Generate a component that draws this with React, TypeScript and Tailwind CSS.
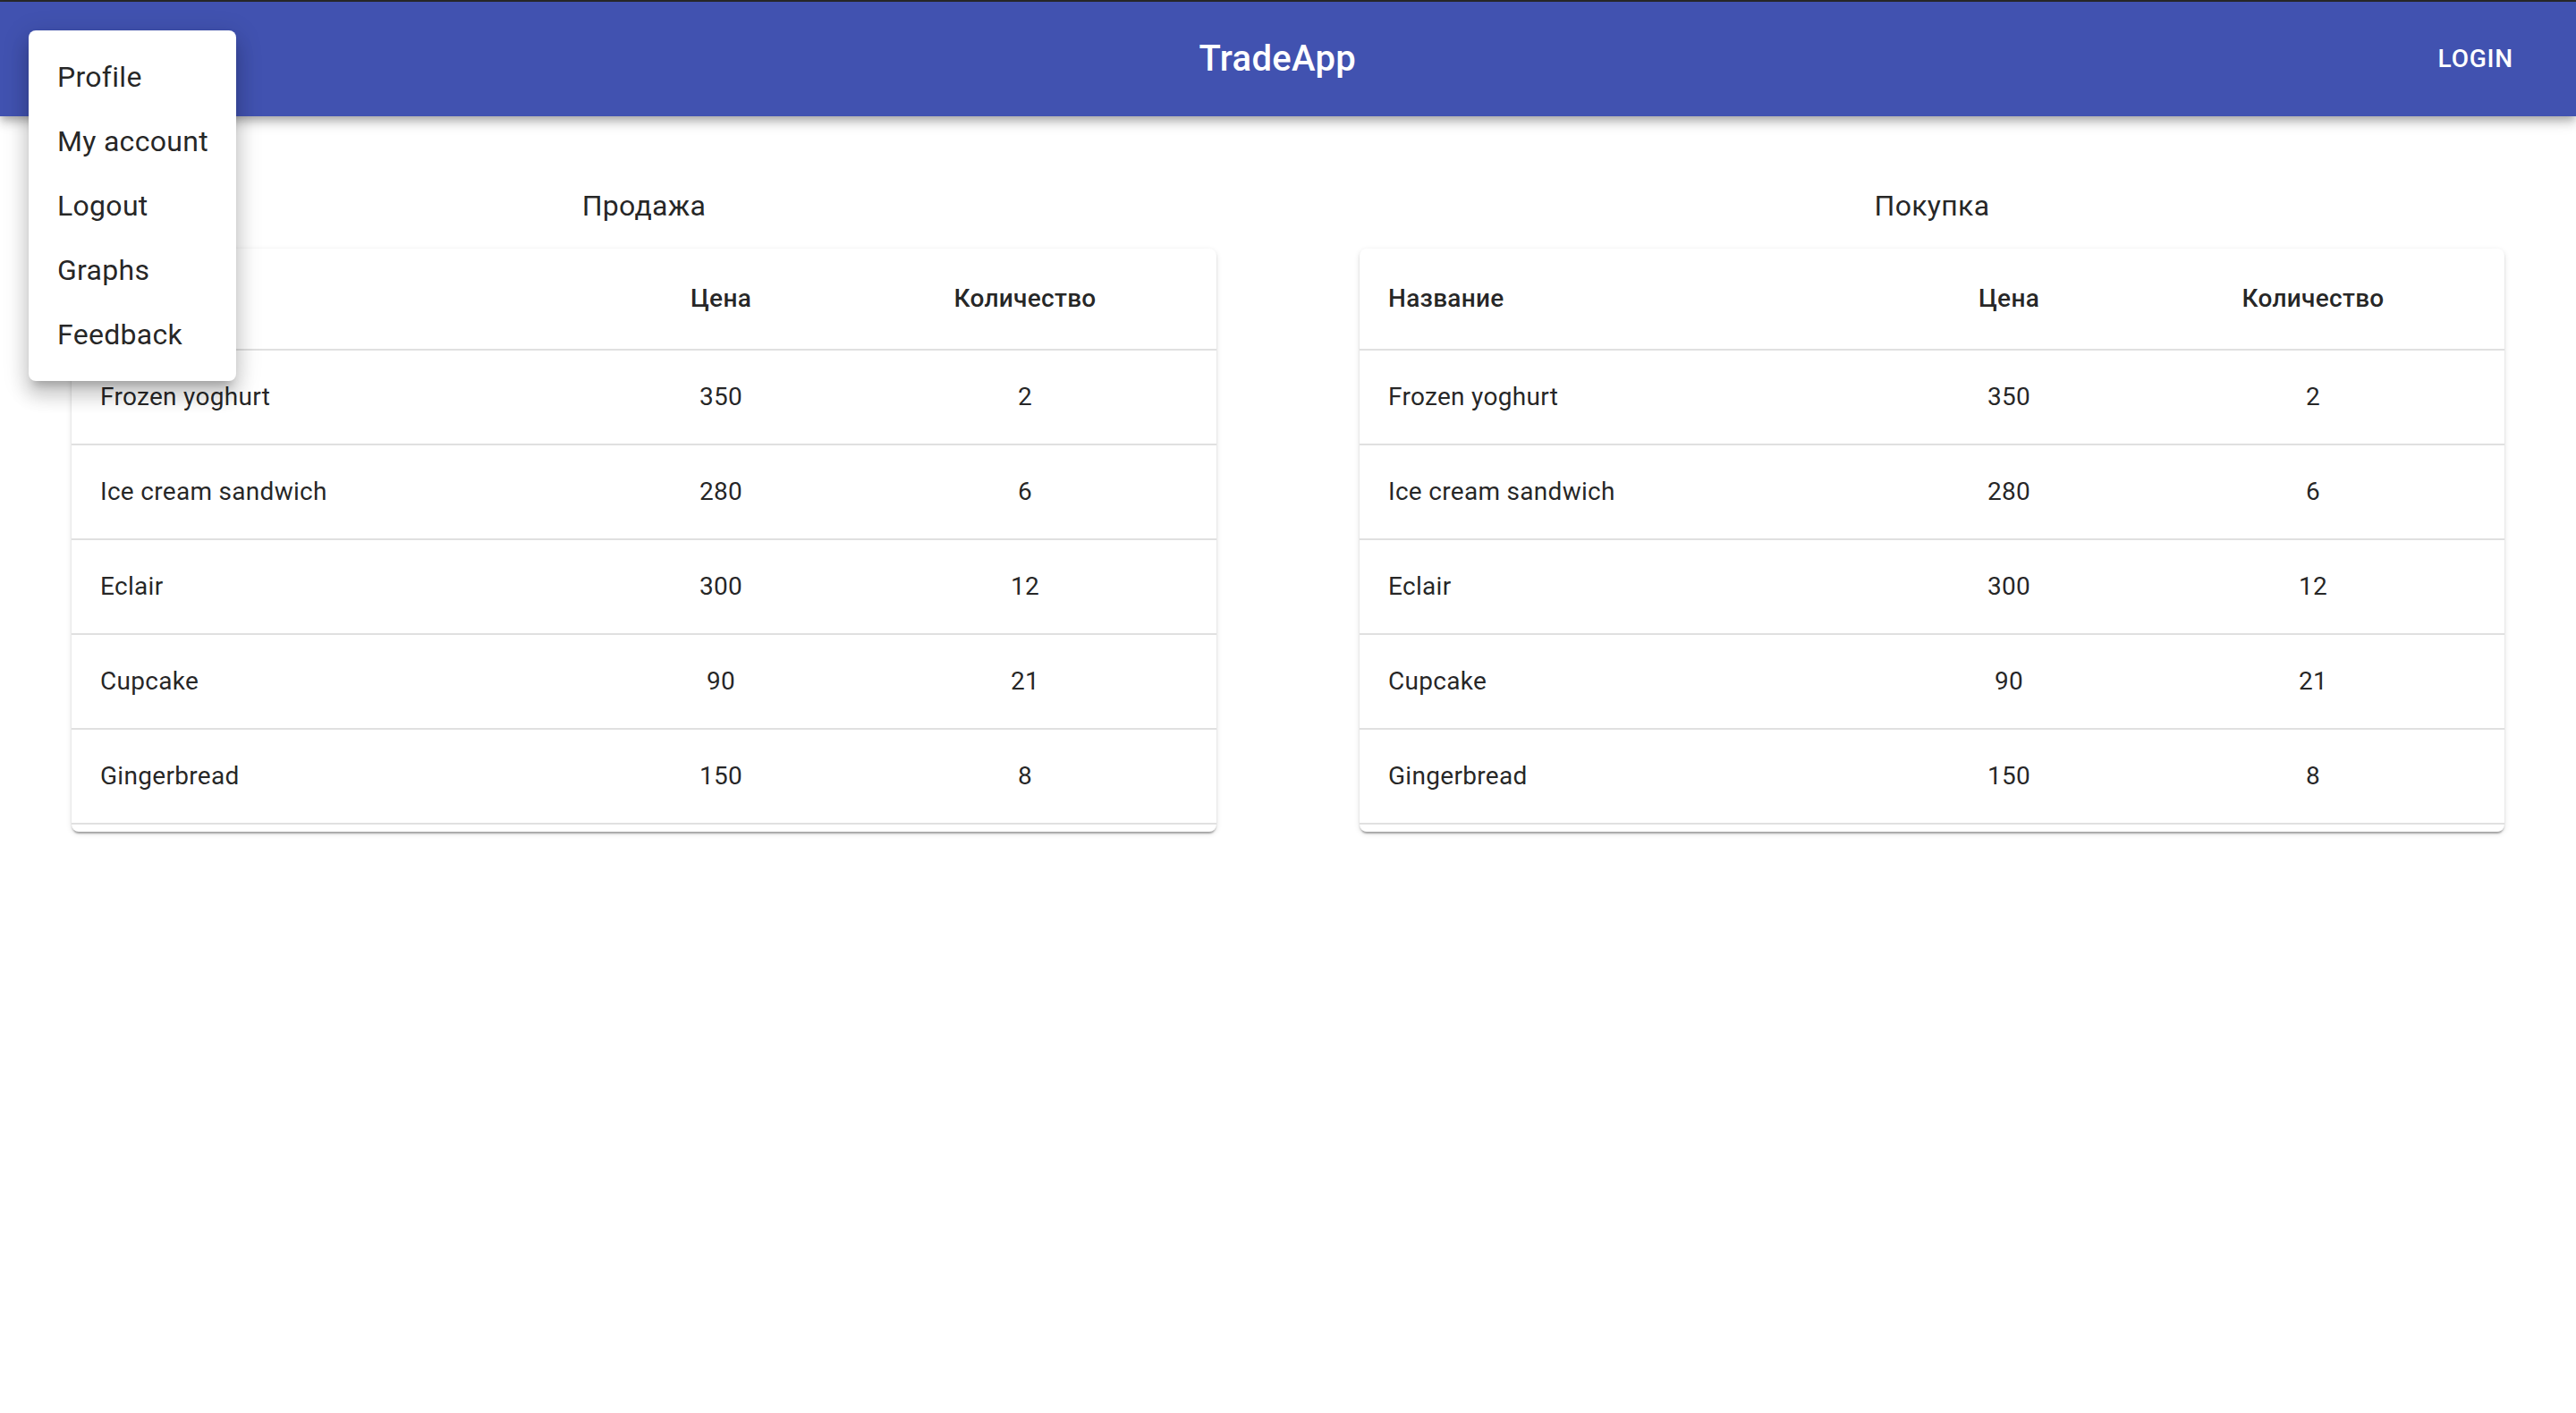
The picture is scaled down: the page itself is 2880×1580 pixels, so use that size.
import React from "react";

const rows = [
  { name: "Frozen yoghurt", price: 350, qty: 2 },
  { name: "Ice cream sandwich", price: 280, qty: 6 },
  { name: "Eclair", price: 300, qty: 12 },
  { name: "Cupcake", price: 90, qty: 21 },
  { name: "Gingerbread", price: 150, qty: 8 },
];

function DataTable() {
  return (
    <div className="rounded-[8px] bg-white pb-[8px] shadow-[0_4px_2px_-2px_rgba(0,0,0,0.2),0_2px_2px_0_rgba(0,0,0,0.14),0_2px_6px_0_rgba(0,0,0,0.12)]">
      <table className="w-full table-fixed border-collapse text-[28px] tracking-[0.3px] text-[rgba(0,0,0,0.87)]">
        <colgroup>
          <col className="w-[600px]" />
          <col className="w-[252px]" />
          <col className="w-[428px]" />
        </colgroup>
        <thead>
          <tr className="border-b-2 border-[#e0e0e0]">
            <th className="px-8 py-8 text-left font-medium leading-[48px]">Название</th>
            <th className="px-8 py-8 text-center font-medium leading-[48px]">Цена</th>
            <th className="px-8 py-8 text-center font-medium leading-[48px]">Количество</th>
          </tr>
        </thead>
        <tbody>
          {rows.map((r) => (
            <tr key={r.name} className="border-b-2 border-[#e0e0e0]">
              <td className="px-8 py-8 text-left leading-[40px]">{r.name}</td>
              <td className="px-8 py-8 text-center leading-[40px]">{r.price}</td>
              <td className="px-8 py-8 text-center leading-[40px]">{r.qty}</td>
            </tr>
          ))}
        </tbody>
      </table>
    </div>
  );
}

export default function App() {
  return (
    <div
      className="relative min-h-screen bg-white"
      style={{ fontFamily: "Roboto, 'Noto Sans', sans-serif" }}
    >
      <div className="h-[2px] bg-[#2b2b2b]" />
      <header className="relative z-10 flex h-[128px] items-center bg-[#4152b0] px-12 text-white shadow-[0_4px_8px_-2px_rgba(0,0,0,0.2),0_8px_10px_0_rgba(0,0,0,0.14),0_2px_20px_0_rgba(0,0,0,0.12)]">
        <div className="w-[99px]" />
        <h1 className="flex-1 text-center text-[40px] font-medium leading-[64px] tracking-[0.3px]">
          TradeApp
        </h1>
        <button className="mr-[6px] px-4 py-3 text-[28px] font-medium uppercase leading-[40px] tracking-[0.8px]">
          Login
        </button>
      </header>

      <main className="grid grid-cols-2 gap-[160px] px-20 pt-[76px]">
        <section>
          <h2 className="mb-6 text-center text-[32px] font-normal leading-[48px] tracking-[0.3px] text-[rgba(0,0,0,0.87)]">
            Продажа
          </h2>
          <DataTable />
        </section>
        <section>
          <h2 className="mb-6 text-center text-[32px] font-normal leading-[48px] tracking-[0.3px] text-[rgba(0,0,0,0.87)]">
            Покупка
          </h2>
          <DataTable />
        </section>
      </main>

      <div className="absolute left-[32px] top-[34px] z-20 w-[232px] rounded-[8px] bg-white py-4 shadow-[0_10px_10px_-6px_rgba(0,0,0,0.2),0_16px_20px_2px_rgba(0,0,0,0.14),0_6px_28px_4px_rgba(0,0,0,0.12)]">
        {["Profile", "My account", "Logout", "Graphs", "Feedback"].map((item) => (
          <div
            key={item}
            className="whitespace-nowrap px-8 py-3 text-[32px] leading-[48px] tracking-[0.3px] text-[rgba(0,0,0,0.87)]"
          >
            {item}
          </div>
        ))}
      </div>
    </div>
  );
}
